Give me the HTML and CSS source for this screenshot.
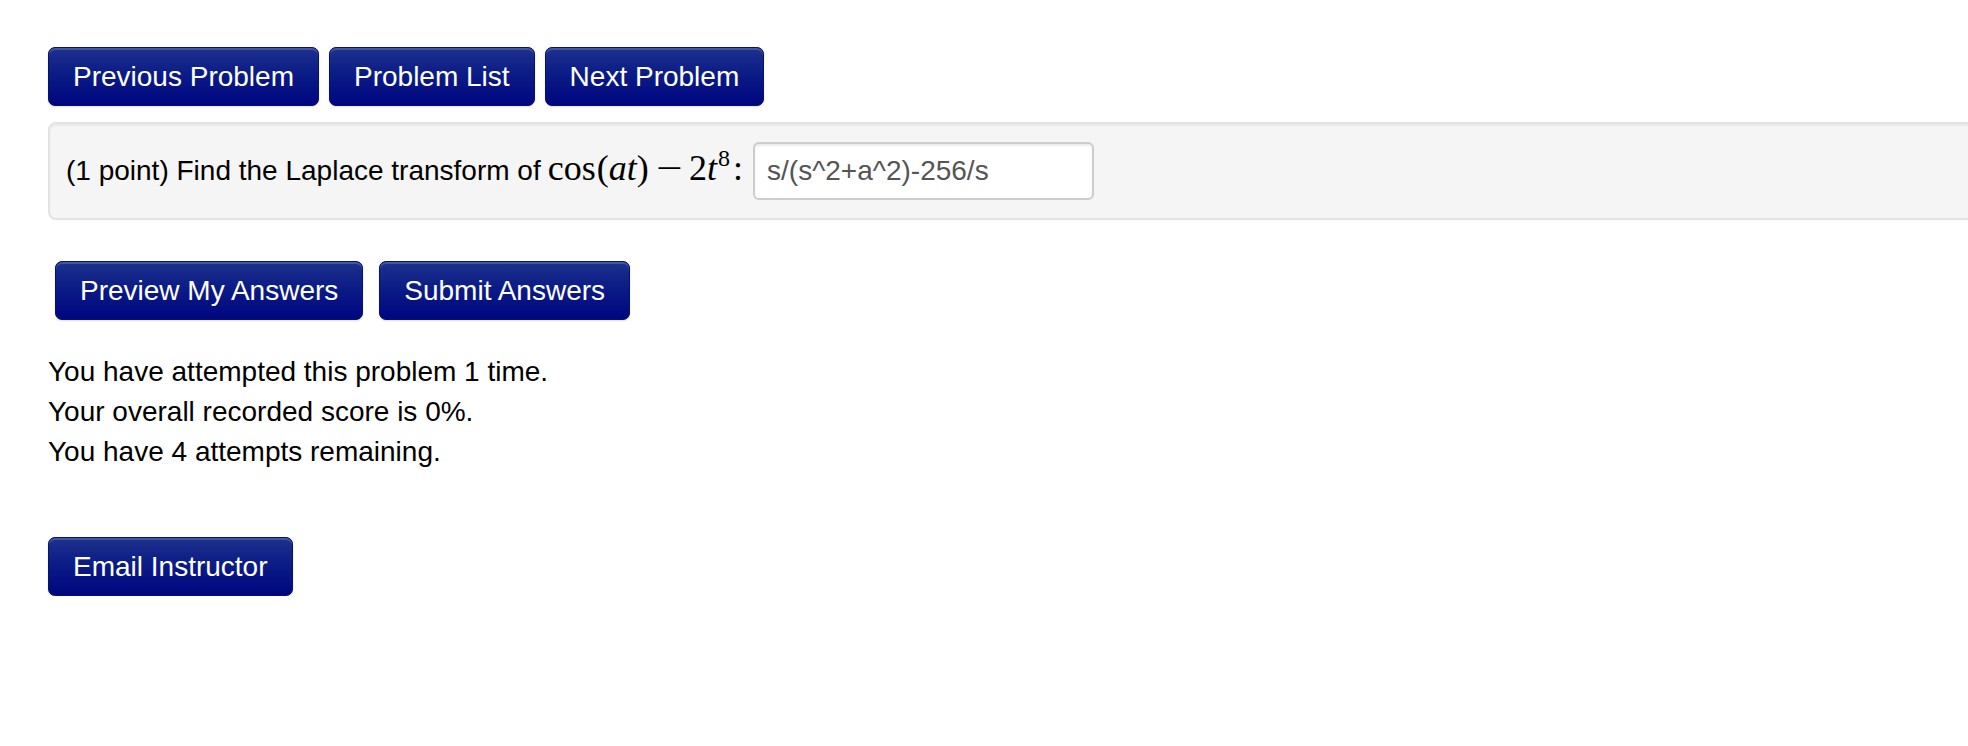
FILE: index.html
```html
<!DOCTYPE html>
<html lang="en">
<head>
<meta charset="utf-8">
<title>Problem</title>
<link rel="stylesheet" href="styles.css">
</head>
<body>
<div class="page">
  <nav class="nav">
    <a class="btn" href="#">Previous Problem</a>
    <a class="btn" href="#">Problem List</a>
    <a class="btn" href="#">Next Problem</a>
  </nav>

  <div class="problem">
    <span class="question"><span class="prompt">(1 point) Find the Laplace transform of</span><span class="math"><span class="fn">cos</span><span class="paren">(</span><i class="var">a</i><i class="var">t</i><span class="paren">)</span><span class="minus">&minus;</span><span class="num">2</span><i class="var">t</i><sup class="sup">8</sup><span class="colon">:</span></span></span>
    <input class="answer" type="text" value="s/(s^2+a^2)-256/s">
  </div>

  <div class="submit-row">
    <button class="btn" type="button">Preview My Answers</button>
    <button class="btn" type="button">Submit Answers</button>
  </div>

  <div class="status">
    <div>You have attempted this problem 1 time.</div>
    <div>Your overall recorded score is 0%.</div>
    <div>You have 4 attempts remaining.</div>
  </div>

  <div class="email-row">
    <button class="btn" type="button">Email Instructor</button>
  </div>
</div>
</body>
</html>
```

FILE: styles.css
```css
html, body {
  margin: 0;
  padding: 0;
  background: #ffffff;
  overflow: hidden;
}

body {
  font-family: "Liberation Sans", Arial, Helvetica, sans-serif;
  font-size: 28px;
  line-height: 40px;
  color: #111111;
}

.page {
  padding: 47px 0 0 48px;
}

.btn {
  display: inline-block;
  box-sizing: border-box;
  height: 59px;
  padding: 9px 24px 8px;
  font-family: "Liberation Sans", Arial, Helvetica, sans-serif;
  font-size: 28px;
  line-height: 40px;
  color: #ffffff;
  text-decoration: none;
  white-space: nowrap;
  background-color: #000a7e;
  background-image: linear-gradient(to bottom, #1d318c 0%, #0b1c86 45%, #000680 100%);
  border: 1px solid #061170;
  border-radius: 7px;
  box-shadow: inset 0 2px 0 rgba(255, 255, 255, 0.18), 0 1px 2px rgba(0, 0, 0, 0.12);
  cursor: pointer;
}

.nav {
  display: flex;
  gap: 10px;
  margin-bottom: 16px;
}

.problem {
  display: flex;
  align-items: center;
  height: 58px;
  padding: 18px 16px;
  margin-right: -60px;
  background: #f5f5f5;
  border: 2px solid #e3e3e3;
  border-radius: 8px;
  box-shadow: inset 0 2px 2px rgba(0, 0, 0, 0.05);
  color: #000000;
  white-space: nowrap;
}

.question {
  line-height: 40px;
}

.prompt {
  margin-right: 7px;
}

.math {
  font-family: "Liberation Serif", "Times New Roman", serif;
  font-size: 36px;
  line-height: 0;
  color: #000000;
}

.math .var {
  font-style: italic;
}

.math .fn {
  margin-right: 1px;
}

.math .minus {
  display: inline-block;
  margin: 0 10px;
  transform: scaleX(1.3);
}

.math .sup {
  font-size: 24px;
  line-height: 0;
  vertical-align: 14px;
  margin-left: 1px;
}

.math .colon {
  margin-left: 3px;
}

.answer {
  box-sizing: border-box;
  width: 341px;
  height: 58px;
  margin-left: 10px;
  padding: 0 12px;
  font-family: "Liberation Sans", Arial, Helvetica, sans-serif;
  font-size: 28px;
  color: #555555;
  background: #ffffff;
  border: 2px solid #cccccc;
  border-radius: 6px;
  box-shadow: inset 0 2px 2px rgba(0, 0, 0, 0.075);
  outline: none;
}

.submit-row {
  display: flex;
  gap: 16px;
  margin-top: 41px;
  padding-left: 7px;
}

.status {
  margin-top: 32px;
  color: #000000;
}

.email-row {
  margin-top: 65px;
}
```
